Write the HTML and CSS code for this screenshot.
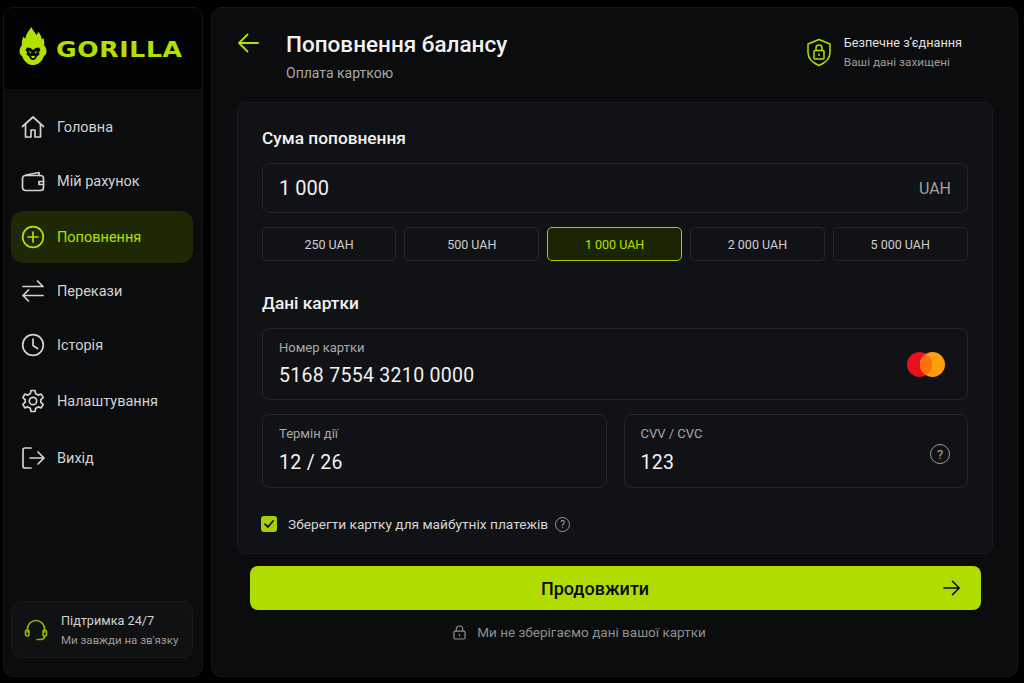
FILE: index.html

```html
<!DOCTYPE html>
<html lang="uk">
<head>
    <meta charset="UTF-8">
    <meta name="viewport" content="width=device-width, initial-scale=1.0">
    <title>Gorilla - Поповнення балансу</title>
    <link rel="stylesheet" href="styles.css">
</head>
<body>

<div class="app">
    <aside class="sidebar">
        <div class="logo">
            <svg class="logo-mark" viewBox="0 0 28 38" width="28" height="38">
                <path fill="#b4e000" d="M12.500 0C13.500 3.500 16 5 17.500 8 18.500 7 19 6 19 4.500 21.500 7 22.500 10 22.800 12.500 23.500 12 24 11.500 24 10.500 25.500 13.500 25.500 16 25 18 26.500 20 27.500 22 27.500 24.500 27.500 26.500 26.500 28 25 29 24 32 22 35 19.500 36.500 17.500 37.700 15.500 38 14 38 12.500 38 10.500 37.700 8.500 36.500 6 35 4 32 3 29 1.500 28 .5 26.500 .5 24.500 .5 22 1.500 20 3 18 2.500 15.500 3 12.500 4.500 9.500 5 10.500 5.500 11 6.500 11.500 6.500 8 9.500 4 12.500 0z"/>
                <path fill="#0a0c02" d="M14 23l2.500-2 3.500-.5 1.500 2.500-1.500 2 .5 2.500-2.500 2c-1 2.500-2.500 3.500-4 3.500s-3-1-4-3.500l-2.500-2 .5-2.500-1.500-2 1.500-2.500 3.500.5z"/>
                <path fill="#b4e000" d="M9.500 24l3 1.200-1 1.300zM18.500 24l-3 1.200 1 1.300zM12 29h4l-1 2h-2z"/>
            </svg>
            <span class="logo-text">GORILLA</span>
        </div>

        <nav class="nav">
            <a class="nav-item">
                <svg class="icon" viewBox="0 0 24 24"><path d="M1.500 11.500 12 2l10.500 9.500"/><path d="M4.500 9.500v12.500h5.500V15h4v7h5.500V9.500"/></svg>
                Головна
            </a>
            <a class="nav-item">
                <svg class="icon" viewBox="0 0 24 24"><path d="M18 6.500V3.500L5 6"/><rect x="1.500" y="6.500" width="21" height="15" rx="3"/><path d="M22.500 12.500H18v3h4.500"/></svg>
                Мій рахунок
            </a>
            <a class="nav-item active">
                <svg class="icon" viewBox="0 0 24 24"><circle cx="12" cy="12" r="10.300"/><path d="M12 7v10M7 12h10"/></svg>
                Поповнення
            </a>
            <a class="nav-item">
                <svg class="icon" viewBox="0 0 24 24"><path d="M2 7.500H22M16.500 2l5.500 5.500"/><path d="M22 16.500H2M7.500 22 2 16.500M7.500 11 2 16.500"/></svg>
                Перекази
            </a>
            <a class="nav-item">
                <svg class="icon" viewBox="0 0 24 24"><circle cx="12" cy="12" r="10.300"/><path d="M12 6V12.500l4.500 3"/></svg>
                Історія
            </a>
            <a class="nav-item">
                <svg class="icon" viewBox="0 0 24 24"><circle cx="12" cy="12" r="3.700"/><path d="M10 1.500h4l.7 3.200 2.500 1.400 3-1 2 3.500-2.400 2.100 0 2.600 2.400 2.100-2 3.500-3-1-2.500 1.400-.7 3.200h-4l-.7-3.200-2.500-1.400-3 1-2-3.500 2.400-2.100 0-2.600-2.400-2.100 2-3.500 3 1L9.300 4.700z"/></svg>
                Налаштування
            </a>
            <a class="nav-item">
                <svg class="icon" viewBox="0 0 24 24"><path d="M10 2H4a2 2 0 0 0-2 2v16a2 2 0 0 0 2 2h6"/><path d="M9 12h14M17 6l6 6-6 6"/></svg>
                Вихід
            </a>
        </nav>

        <div class="support">
            <svg class="support-icon" viewBox="0 0 24 24"><path d="M3.500 14v-3a8.500 8.500 0 0 1 17 0v3"/><rect x="1.500" y="12" width="3.500" height="6" rx="1.700"/><rect x="19" y="12" width="3.500" height="6" rx="1.700"/><path d="M20.500 18c0 2.500-2 3.500-4 3.500H13"/></svg>
            <div>
                <div class="support-title">Підтримка 24/7</div>
                <div class="support-sub">Ми завжди на зв'язку</div>
            </div>
        </div>
    </aside>

    <main class="main">
        <header class="top">
            <svg class="back" viewBox="0 0 22 22"><path d="M21 11H2M10.500 2.500 2 11l8.500 8.500"/></svg>
            <div class="heading">
                <h1>Поповнення балансу</h1>
                <p>Оплата карткою</p>
            </div>
            <div class="secure">
                <svg class="secure-icon" viewBox="0 0 24 28"><path d="M12 1 23 5.500V14c0 6-5 10.500-11 13C6 24.500 1 20 1 14V5.500z"/><rect x="7" y="12" width="10" height="8.500" rx="1"/><path d="M9 12V9.500a3 3 0 0 1 6 0V12M12 15v2.500"/></svg>
                <div>
                    <div class="secure-title">Безпечне з’єднання</div>
                    <div class="secure-sub">Ваші дані захищені</div>
                </div>
            </div>
        </header>

        <section class="card">
            <h2>Сума поповнення</h2>
            <div class="amount">
                <span class="amount-value">1 000</span>
                <span class="amount-cur">UAH</span>
            </div>
            <div class="chips">
                <button class="chip">250 UAH</button>
                <button class="chip">500 UAH</button>
                <button class="chip selected">1 000 UAH</button>
                <button class="chip">2 000 UAH</button>
                <button class="chip">5 000 UAH</button>
            </div>

            <h2 class="card-title">Дані картки</h2>
            <div class="field field-number">
                <div>
                    <label>Номер картки</label>
                    <div class="field-value">5168 7554 3210 0000</div>
                </div>
                <svg class="mastercard" viewBox="0 0 38 25">
                    <circle cx="12.500" cy="12.500" r="12.500" fill="#e6121d"/>
                    <circle cx="25.500" cy="12.500" r="12.500" fill="#ff9d0a"/>
                    <path fill="#fb7308" d="M19 1.820A12.500 12.500 0 0 1 19 23.180 12.500 12.500 0 0 1 19 1.820z"/>
                </svg>
            </div>
            <div class="field-row">
                <div class="field">
                    <div>
                        <label>Термін дії</label>
                        <div class="field-value">12 / 26</div>
                    </div>
                </div>
                <div class="field">
                    <div>
                        <label>CVV / CVC</label>
                        <div class="field-value">123</div>
                    </div>
                    <span class="help help-lg">?</span>
                </div>
            </div>
            <div class="save">
                <span class="checkbox"><svg viewBox="0 0 16 16"><path d="M4 8.200 7 11l5-6"/></svg></span>
                Зберегти картку для майбутніх платежів
                <span class="help">?</span>
            </div>
        </section>

        <button class="submit">
            Продовжити
            <svg class="submit-arrow" viewBox="0 0 20 20"><path d="M1 10h17M10.500 2.500 18 10l-7.500 7.500"/></svg>
        </button>
        <div class="note">
            <svg class="note-icon" viewBox="0 0 14 16"><rect x="1" y="6.500" width="12" height="8.500" rx="1.500"/><path d="M3.500 6.500V4.500a3.500 3.500 0 0 1 7 0v2M7 10v2"/></svg>
            Ми не зберігаємо дані вашої картки
        </div>
    </main>
</div>

</body>
</html>
```

FILE: styles.css

```css
* {
    box-sizing: border-box;
}
body {
    margin: 0;
    background-color: #000;
    font-family: Roboto, "Liberation Sans", sans-serif;
    color: #e6e6e6;
}
.app {
    display: flex;
    gap: 8px;
    width: 1024px;
    height: 683px;
    padding: 7px 6px 6px 3px;
}

/* sidebar */
.sidebar {
    display: flex;
    flex-direction: column;
    width: 200px;
    flex-shrink: 0;
    background-color: #0b0c0e;
    border: 1px solid #141517;
    border-radius: 10px;
    overflow: hidden;
}
.logo {
    display: flex;
    align-items: center;
    gap: 9px;
    height: 81px;
    padding: 2px 0 0 15px;
    background-color: #030303;
}
.logo-mark {
    margin-top: -8px;
}
.logo-text {
    font-family: "DejaVu Sans", sans-serif;
    font-size: 22px;
    font-weight: 700;
    letter-spacing: 0.6px;
    color: #b4e000;
    transform: scaleX(1.14);
    transform-origin: left center;
}
.nav {
    display: flex;
    flex-direction: column;
    padding: 10px 9px 0 7px;
}
.nav-item {
    display: flex;
    align-items: center;
    gap: 12px;
    height: 52px;
    margin-top: 2px;
    padding: 0 10px;
    border-radius: 12px;
    font-size: 14.5px;
    color: #d2d2d2;
}
.nav-item:nth-child(3),
.nav-item:nth-child(6) {
    margin-top: 4px;
}
.nav-item:nth-child(7) {
    margin-top: 5px;
}
.nav-item.active {
    background-color: #1e2805;
    color: #b4e000;
}
.icon {
    width: 24px;
    height: 24px;
    fill: none;
    stroke: #d2d2d2;
    stroke-width: 1.7;
    stroke-linecap: round;
    stroke-linejoin: round;
    flex-shrink: 0;
}
.active .icon {
    stroke: #b4e000;
}
.support {
    display: flex;
    align-items: center;
    gap: 13px;
    height: 57px;
    margin: auto 9px 18px 7px;
    padding: 0 0 0 12px;
    background-color: #101113;
    border: 1px solid #17181a;
    border-radius: 10px;
    white-space: nowrap;
}
.support-icon {
    width: 24px;
    height: 24px;
    fill: none;
    stroke: #8fb500;
    stroke-width: 1.7;
    stroke-linecap: round;
    flex-shrink: 0;
}
.support-title {
    font-size: 12.7px;
    color: #d2d2d2;
}
.support-sub {
    margin-top: 5px;
    font-size: 11.5px;
    color: #9c9c9c;
}

/* main */
.main {
    display: flex;
    flex-direction: column;
    flex: 1;
    padding: 0 25px;
    background-color: #0b0c0e;
    border: 1px solid #17181a;
    border-radius: 10px;
}
.top {
    display: flex;
    align-items: flex-start;
    height: 94px;
}
.back {
    width: 22px;
    height: 22px;
    margin-top: 24px;
    fill: none;
    stroke: #b4e000;
    stroke-width: 1.8;
    stroke-linecap: round;
    stroke-linejoin: round;
}
.heading {
    margin-left: 27px;
    flex: 1;
}
h1 {
    margin: 22px 0 0;
    font-size: 22.5px;
    font-weight: 500;
    line-height: 28px;
    color: #f2f2f2;
}
.heading p {
    margin: 6px 0 0;
    font-size: 14px;
    line-height: 18px;
    color: #a8a8a8;
}
.secure {
    display: flex;
    align-items: center;
    gap: 13px;
    margin: 27px 30px 0 0;
}
.secure-icon {
    width: 24px;
    height: 29px;
    fill: none;
    stroke: #b4e000;
    stroke-width: 1.5;
    stroke-linejoin: round;
}
.secure-title {
    font-size: 12.7px;
    line-height: 16px;
    color: #e0e0e0;
}
.secure-sub {
    margin-top: 3px;
    font-size: 11.8px;
    line-height: 16px;
    color: #9c9c9c;
}

.card {
    height: 452px;
    margin-right: -1px;
    padding: 25px 24px 0;
    background-color: #111215;
    border: 1px solid #18191c;
    border-radius: 8px;
}
h2 {
    margin: 0;
    font-size: 17.3px;
    font-weight: 500;
    line-height: 20px;
    color: #f2f2f2;
}
.card-title {
    margin-top: 32px;
}
.amount {
    display: flex;
    align-items: center;
    justify-content: space-between;
    height: 50px;
    margin-top: 15px;
    padding: 0 16px;
    border: 1px solid #25262a;
    border-radius: 8px;
}
.amount-value {
    font-size: 20px;
    color: #f0f0f0;
}
.amount-cur {
    font-size: 16px;
    color: #a0a0a0;
}
.chips {
    display: grid;
    grid-template-columns: repeat(5, 1fr);
    gap: 8px;
    margin: 14px 0.4px 0 -0.4px;
}
.chip {
    height: 34px;
    padding: 0;
    background: none;
    border: 1px solid #25262a;
    border-radius: 5px;
    font-family: inherit;
    font-size: 12.5px;
    color: #cfcfcf;
}
.chip.selected {
    background-color: #1b2405;
    border-color: #a5cc00;
    color: #b4e000;
}
.field {
    display: flex;
    align-items: center;
    justify-content: space-between;
    height: 74px;
    padding: 0 16px 2px;
    border: 1px solid #25262a;
    border-radius: 8px;
}
.field-number {
    height: 72px;
    margin-top: 15px;
    padding-bottom: 0;
}
.field-row {
    display: grid;
    grid-template-columns: 1fr 1fr;
    gap: 17px;
    margin-top: 14px;
}
label {
    display: block;
    font-size: 13px;
    line-height: 16px;
    color: #a8a8a8;
}
.field-value {
    margin-top: 8px;
    font-size: 19.5px;
    line-height: 24px;
    letter-spacing: 0.3px;
    color: #f0f0f0;
}
.field-row .field-value {
    margin-top: 9px;
}
.mastercard {
    width: 38px;
    height: 25px;
    margin-right: 6px;
}
.help {
    display: inline-flex;
    align-items: center;
    justify-content: center;
    width: 15px;
    height: 15px;
    margin-left: 7px;
    border: 1px solid #999;
    border-radius: 50%;
    font-size: 10px;
    color: #a8a8a8;
}
.help-lg {
    width: 20px;
    height: 20px;
    margin: 8px 1px 0 0;
    font-size: 13px;
}
.save {
    display: flex;
    align-items: center;
    margin-top: 28px;
    margin-left: -1px;
    font-size: 13.7px;
    color: #d6d6d6;
}
.checkbox {
    display: flex;
    width: 16px;
    height: 16px;
    margin-right: 11px;
    background-color: #a8d000;
    border-radius: 3px;
}
.checkbox svg {
    fill: none;
    stroke: #10140a;
    stroke-width: 1.8;
    stroke-linecap: round;
    stroke-linejoin: round;
}
.submit {
    display: flex;
    align-items: center;
    justify-content: center;
    position: relative;
    height: 44px;
    margin: 12px 11px 0 13px;
    padding: 0 41px 0 0;
    background-color: #b0dc00;
    border: none;
    border-radius: 8px;
    font-family: inherit;
    font-size: 18px;
    font-weight: 500;
    color: #0b0c0e;
}
.submit-arrow {
    position: absolute;
    right: 20px;
    top: 13px;
    width: 18px;
    height: 18px;
    fill: none;
    stroke: #0b0c0e;
    stroke-width: 1.8;
    stroke-linecap: round;
    stroke-linejoin: round;
}
.note {
    display: flex;
    align-items: center;
    justify-content: center;
    gap: 11px;
    margin-top: 14px;
    padding-right: 70px;
    font-size: 13.5px;
    color: #8f8f8f;
}
.note-icon {
    width: 13px;
    height: 15px;
    fill: none;
    stroke: #8f8f8f;
    stroke-width: 1.3;
}
```
